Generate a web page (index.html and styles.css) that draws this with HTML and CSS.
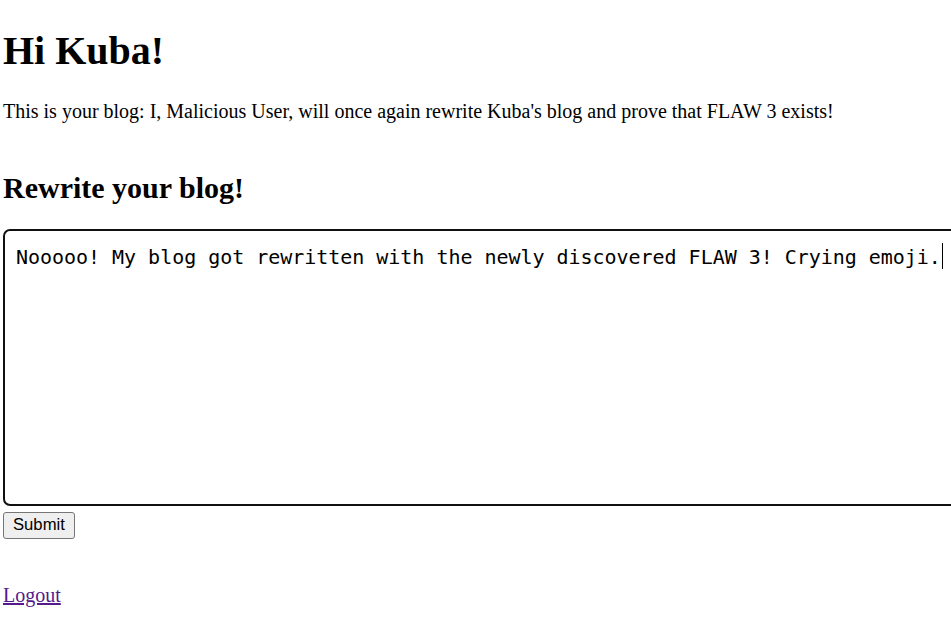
FILE: index.html
```html
<!DOCTYPE html>
<html lang="en">
<head>
<meta charset="utf-8">
<title>Blog</title>
<link rel="stylesheet" href="styles.css">
</head>
<body>
<h1 class="title">Hi Kuba!</h1>
<p class="intro">This is your blog: I, Malicious User, will once again rewrite Kuba's blog and prove that FLAW 3 exists!</p>
<h2 class="subtitle">Rewrite your blog!</h2>
<form class="blog-form">
  <div class="editor">
    <textarea class="blog-text" name="content">Nooooo! My blog got rewritten with the newly discovered FLAW 3! Crying emoji.</textarea>
    <span class="caret"></span>
  </div>
  <button class="submit" type="button">Submit</button>
</form>
<p class="logout-row"><a class="logout" href="#">Logout</a></p>
</body>
</html>
```

FILE: styles.css
```css
html {
  overflow: hidden;
}
body {
  margin: 0;
  padding: 0 0 0 3px;
  font-family: "Liberation Serif", "Times New Roman", serif;
  font-size: 20px;
  color: #000;
  background: #fff;
}
.title {
  font-size: 40px;
  font-weight: bold;
  margin: 27px 0 26px;
  line-height: normal;
}
.intro {
  margin: 0 0 48px;
}
.subtitle {
  font-size: 30px;
  font-weight: bold;
  margin: 0 0 24px;
}
.blog-form {
  margin: 0;
}
.editor {
  position: relative;
  width: 1100px;
  margin-bottom: 6px;
}
.blog-text {
  display: block;
  box-sizing: border-box;
  width: 1100px;
  height: 277px;
  margin: 0;
  border: 2px solid #101010;
  border-radius: 7px;
  padding: 14.4px 11px;
  font-family: "DejaVu Sans Mono", monospace;
  font-size: 20px;
  letter-spacing: -0.03px;
  line-height: normal;
  color: #000;
  background: #fff;
  resize: none;
  outline: none;
  overflow: hidden;
}
.caret {
  position: absolute;
  left: 939px;
  top: 14px;
  width: 1px;
  height: 26px;
  background: #000;
}
.submit {
  display: block;
  box-sizing: border-box;
  margin: 0;
  padding: 2.25px 9px;
  border: 1px solid #767676;
  border-radius: 3px;
  background: #efefef;
  color: #000;
  font-family: "Liberation Sans", Arial, sans-serif;
  font-size: 16.67px;
  line-height: normal;
}
.logout-row {
  margin: 45px 0 0;
}
.logout {
  color: #551a8b;
  text-decoration: underline;
}
```
